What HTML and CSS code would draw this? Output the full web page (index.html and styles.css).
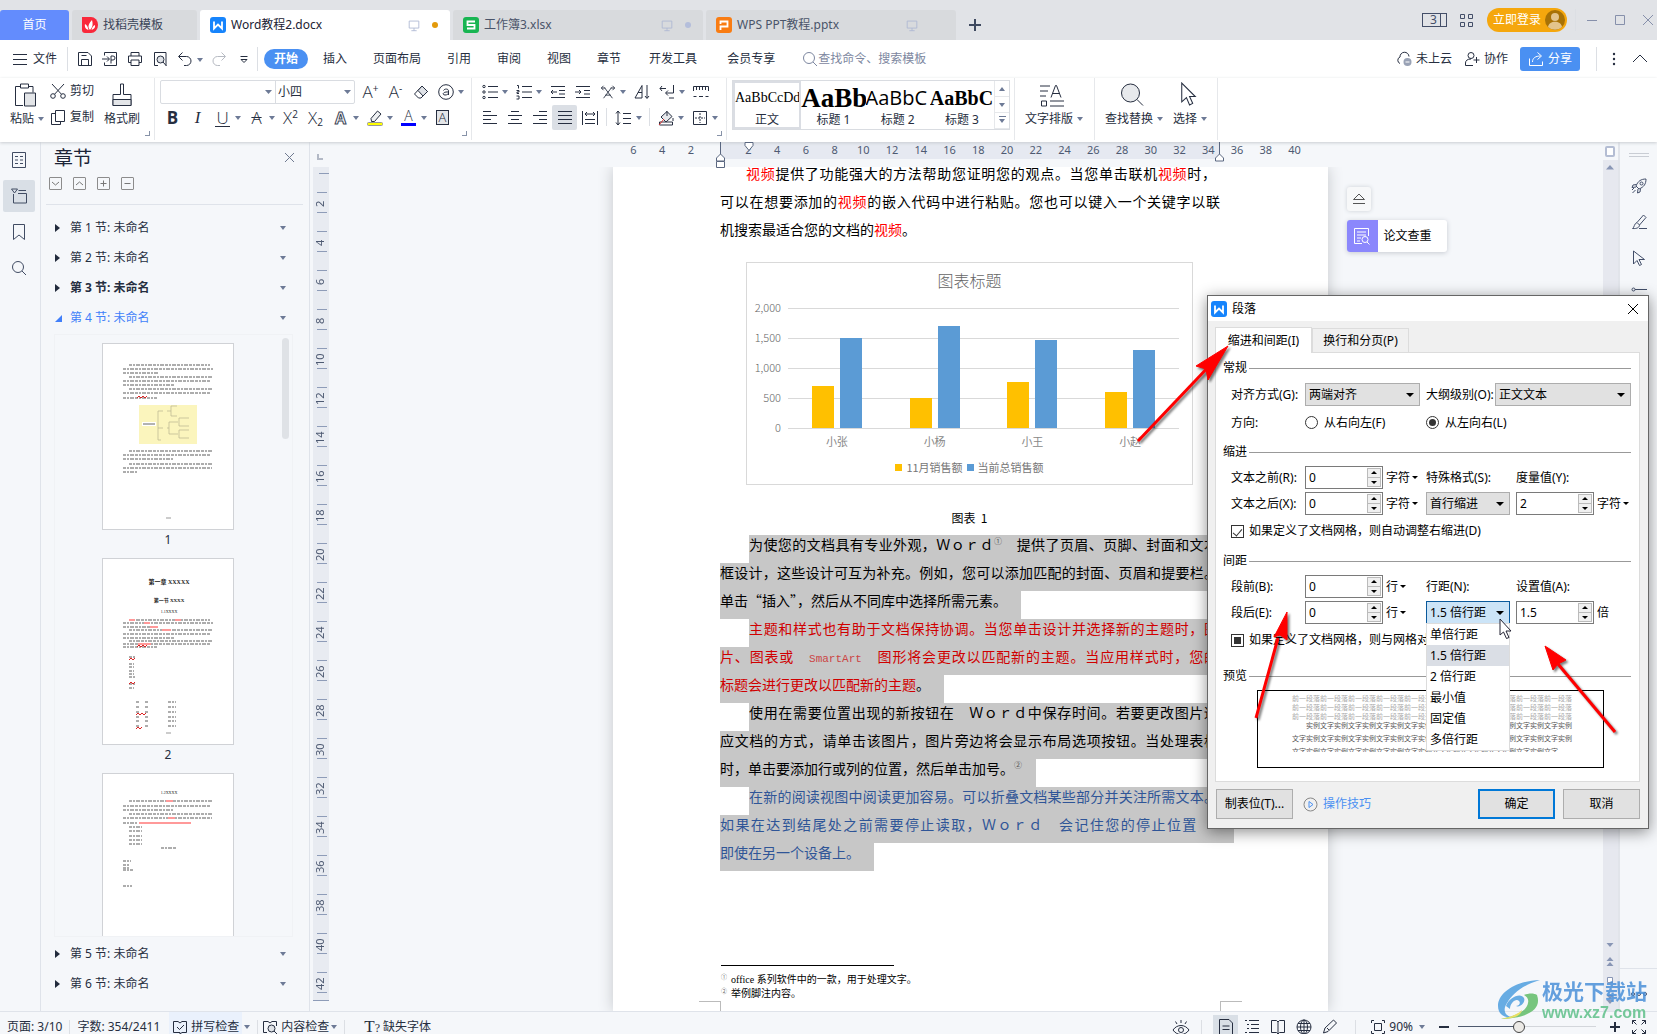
FILE: index.html
```html
<!DOCTYPE html>
<html lang="zh-CN">
<head>
<meta charset="utf-8">
<title>Word教程2.docx</title>
<link rel="stylesheet" href="styles.css">
</head>
<body>
<svg class="sprite" aria-hidden="true">
  <symbol id="i-w" viewBox="0 0 16 16"><rect width="16" height="16" rx="3" fill="#1684fc"/><path d="M4 4.500v7l4-4 4 4v-7" fill="none" stroke="#fff" stroke-width="1.800"/></symbol>
  <symbol id="i-s" viewBox="0 0 16 16"><rect width="16" height="16" rx="3" fill="#18b552"/><path d="M12 4.500H4.500v3.500h7v3.500H4" fill="none" stroke="#fff" stroke-width="1.800"/></symbol>
  <symbol id="i-p" viewBox="0 0 16 16"><rect width="16" height="16" rx="3" fill="#f97c12"/><path d="M4.500 13V9.500h7v-5h-7v2.500" fill="none" stroke="#fff" stroke-width="1.800"/></symbol>
  <symbol id="i-leaf" viewBox="0 0 16 16"><path d="M0 0h9a7 8 0 0 1 0 16H3a3 3 0 0 1-3-3z" fill="#f9283a"/><path d="M8 13C5 10 7 6 10 3c1 4 1 7-2 10zM6.500 13C3 12 2.500 9 3 7c2 1 3 3 3.500 6zM9.500 13c3-1 4-3 3.500-5-2 1-3 2.500-3.500 5z" fill="#fff"/></symbol>
  <symbol id="i-monitor" viewBox="0 0 16 16"><path d="M2.500 3.500h11v8h-11zM8 11.500v3M5 14.500h6"/></symbol>
  <symbol id="i-save" viewBox="0 0 16 16"><path d="M1.500 1.500h9.500l3.500 3.500v9.500h-13zM4.500 14V8.500h7V14M4.500 4.500h5"/></symbol>
  <symbol id="i-export" viewBox="0 0 16 16"><path d="M2.500 4.500v-3h12v13h-12v-3M0 8h7M5 5.500 7.500 8 5 10.500M9 12.500V5h2a2 2 0 0 1 0 4H9"/></symbol>
  <symbol id="i-print" viewBox="0 0 16 16"><path d="M4 5V1.500h8V5M4 11.500H1.500v-6.500h13v6.500H12M4 9h8v5.500H4z"/></symbol>
  <symbol id="i-preview" viewBox="0 0 16 16"><path d="M6 14.500H2.500v-13h11.500v13"/><circle cx="8.500" cy="8.500" r="3.500" fill="#dfe2e7"/><path d="m11 11 3.500 4"/></symbol>
  <symbol id="i-undo" viewBox="0 0 16 16"><path d="M5.500 1.500 1.500 5.500l4 4M2 5.500h7.500a4.500 4.500 0 0 1 0 9H7"/></symbol>
  <symbol id="i-redo" viewBox="0 0 16 16"><path d="m10.500 1.500 4 4-4 4M14 5.500H6.500a4.500 4.500 0 0 0 0 9H9"/></symbol>
  <symbol id="i-qmore" viewBox="0 0 16 16"><path d="M4.500 5.500h7M5 8.500l3 3 3-3z"/></symbol>
  <symbol id="i-search" viewBox="0 0 16 16"><circle cx="7" cy="7" r="5.500"/><path d="m11 11 4 4"/></symbol>
  <symbol id="i-paste" viewBox="0 0 24 24"><path d="M8 4H2.500v19H10M16 4h4v6M7.500 1.500h8v4h-8z"/><path d="M11.500 10.500h11v13h-11z" fill="#e3e5e8"/></symbol>
  <symbol id="i-cut" viewBox="0 0 16 16"><circle cx="3" cy="13" r="2.300"/><circle cx="13" cy="13" r="2.300"/><path d="M2 1l9.500 10.300M14 1 4.500 11.300"/></symbol>
  <symbol id="i-copy" viewBox="0 0 16 16"><path d="M5.500 1.500h9v11h-9zM5.500 4.500h-4v11h9v-3"/></symbol>
  <symbol id="i-brush" viewBox="0 0 24 24"><path d="M10.500 1.500h3v10.500h7.500v11H3V12h7.500z"/><path d="M3 17h18v6H3z" fill="#e3e5e8"/></symbol>
  <symbol id="i-eraser" viewBox="0 0 16 16"><path d="m5.500 14-4-4L9 2l5.500 5.500-6.500 6.500z"/><path d="M5 6.500 9 2l5.500 5.500-4.500 4.500z" fill="#dfe2e7"/></symbol>
  <symbol id="i-at" viewBox="0 0 16 16"><circle cx="8" cy="8" r="7.300"/><path d="M5.500 6.500c1-2 5-2 5 .5V11M10.500 8c-6-.5-6.500 3-3.500 3 2 0 3.500-1 3.500-2"/></symbol>
  <symbol id="i-hl" viewBox="0 0 16 16"><path d="M4 8.500 10.500 1l3.500 3-6.500 7.500H4.500z" fill="#eef0f2"/><rect x=".5" y="12.500" width="15" height="3" rx="1" fill="#ff0" stroke="#999"/></symbol>
  <symbol id="i-bul" viewBox="0 0 16 16"><circle cx="2" cy="2.500" r="1.200"/><circle cx="2" cy="8" r="1.200"/><circle cx="2" cy="13.500" r="1.200"/><path d="M6 2.500h10M6 8h10M6 13.500h10"/></symbol>
  <symbol id="i-num" viewBox="0 0 16 16"><path d="M1 1.500h1.500v3M.5 6.500h2.500v1.500H1v1.500h2M.5 12h2.500v3H.5M6 2.500h10M6 8h10M6 13.500h10"/></symbol>
  <symbol id="i-out" viewBox="0 0 16 16"><path d="M1 2.500h14M9 6.500h6M9 10h6M1 13.500h14M7 8H1M3 6 1 8l2 2"/></symbol>
  <symbol id="i-in" viewBox="0 0 16 16"><path d="M1 2.500h14M9 6.500h6M9 10h6M1 13.500h14M0 8h6M4 6l2 2-2 2"/></symbol>
  <symbol id="i-scale" viewBox="0 0 18 16"><path d="M4 15 13 3M14 15 5 3M4 1 1.500 3.500 4 6M14 1l2.500 2.500L14 6M1.500 3.500H6M12 3.500h4.500M6 11.500h6"/></symbol>
  <symbol id="i-sort" viewBox="0 0 16 16"><path d="M1 14 8 1.500V14zM4 8.500h4M13 1v13M11 12l2 2.500 2-2.500"/></symbol>
  <symbol id="i-wrap" viewBox="0 0 16 16"><path d="M3 2 1 4.500l2 2.500M1 4.500h6M14.500 1v8H7M9 6.500 6.500 9 9 11.500M10 14h5"/></symbol>
  <symbol id="i-tabs" viewBox="0 0 16 16"><path d="M.5 7V2.500h15V7M3.500 3v3M6.500 3v3M9.500 3v3M12.500 3v3M.5 12.500h3M6 12.500h4M12.500 12.500h3"/></symbol>
  <symbol id="i-al" viewBox="0 0 16 16"><path d="M1 1.500h8M1 5.500h14M1 9.500h8M1 13.500h14"/></symbol>
  <symbol id="i-ac" viewBox="0 0 16 16"><path d="M4 1.500h8M1 5.500h14M4 9.500h8M1 13.500h14"/></symbol>
  <symbol id="i-ar" viewBox="0 0 16 16"><path d="M7 1.500h8M1 5.500h14M7 9.500h8M1 13.500h14"/></symbol>
  <symbol id="i-aj" viewBox="0 0 16 16"><path d="M1 1.500h14M1 5.500h14M1 9.500h14M1 13.500h14"/></symbol>
  <symbol id="i-ad" viewBox="0 0 16 16"><path d="M.5 1v14M15.500 1v14M3 4h10M5 2 3 4l2 2M11 2l2 2-2 2M3 9.500h10M3 13.500h10"/></symbol>
  <symbol id="i-ls" viewBox="0 0 16 16"><path d="M3 1v14M1 3.500 3 1l2 2.500M1 12.500 3 15l2-2.500M8 3.500h8M8 8.500h8M8 13.500h8"/></symbol>
  <symbol id="i-fill" viewBox="0 0 16 16"><path d="m3 7 6-5.500 5 5L8 12z" fill="#e7e9ec"/><path d="M9 1v5M15 8v3M1.500 12h13v3h-13z"/><path d="m1 15 5-6" stroke="#d33"/></symbol>
  <symbol id="i-border" viewBox="0 0 16 16"><path d="M1.500 1.500h13v13h-13z"/><path d="M8 3v10M3 8h10" stroke-dasharray="2 1"/></symbol>
  <symbol id="i-typeset" viewBox="0 0 24 24"><path d="M0 3.500h10M0 8.500h8M0 13.500h6M1.500 18.500h5v5h-5zM10 18.500h14M10 23.500h14M11 15l4.500-12h1l4.500 12M13 11h7"/></symbol>
  <symbol id="i-find" viewBox="0 0 24 24"><circle cx="10.500" cy="10.500" r="9" fill="#e7e9ec"/><path d="m17 17 6 6"/></symbol>
  <symbol id="i-ptr" viewBox="0 0 16 24"><path d="M2 1v18l4.500-4 3 7 3-1.500-3-6.500H15z"/></symbol>
  <symbol id="i-arrow" viewBox="0 0 16 16"><path d="M2.500 1v13l3.500-3.500 2.500 5 2-1-2.500-5h5.500z"/></symbol>
  <symbol id="i-cloud" viewBox="0 0 16 16"><path d="M4 12.500a3.500 3.500 0 0 1 0-6.500 4.500 4.500 0 0 1 9-.5"/><circle cx="11.500" cy="11" r="4" fill="#99a2b5" stroke="none"/><path d="M9.500 11h4" stroke="#fff"/></symbol>
  <symbol id="i-collab" viewBox="0 0 16 16"><circle cx="7" cy="4.500" r="3"/><path d="M9 14.500H1.500V12c0-2.500 2-4 5.500-4M12.500 6v6M9.500 9h6"/></symbol>
  <symbol id="i-share" viewBox="0 0 16 16"><path d="M1.500 7.500v7h13v-4M4.500 11c0-4 3-6 8-6M9.500 1.500 13.500 5l-4 3.500"/></symbol>
  <symbol id="i-outline" viewBox="0 0 16 16"><path d="M1.500.5h13v15h-13zM4 4.500h3M9 4.500h3M4 8h3M9 8h3M4 11.500h3M9 11.500h3"/></symbol>
  <symbol id="i-chap" viewBox="0 0 16 16"><path d="M.5 1h6L3.500 5zM7.500 2.500H15M2.500 6v9H15.500V5.500H7"/></symbol>
  <symbol id="i-mark" viewBox="0 0 16 16"><path d="M2.500.5h11v15L8 11l-5.500 4.500z"/></symbol>
  <symbol id="i-rocket" viewBox="0 0 16 16"><path d="M5 8C7 3 10 1 15 1c0 5-2 8-7 10zM5.500 6.500 2 7l-1 2.500 4-.5M9.500 10.500 9 14l-2.500 1L7 11M1 12l2-2M1.500 15l3-3"/><circle cx="10.500" cy="5.500" r="1.500"/></symbol>
  <symbol id="i-pen" viewBox="0 0 16 16"><path d="M6 8.500 12.500 1 15 3.500 8.500 11M6 8.500 8.500 11c0 2-2 4-7 3.500 2-1 1.500-5 4.500-6M8 14.500h8"/></symbol>
  <symbol id="i-write" viewBox="0 0 16 16"><path d="M1.500 14 3 9l8.500-8 3 3L6 12.500zM5 9l2 2M7 15.500h8"/></symbol>
  <symbol id="i-spell" viewBox="0 0 16 16"><path d="M8 13.500H1.500v-11H6L8 4l2-1.500h4.500v11H10L8 15zM5 8l2.500 2.500L12 6"/></symbol>
  <symbol id="i-content" viewBox="0 0 16 16"><path d="M5 13.500H1.500v-11H6L8 4l2-1.500h4.500V7"/><circle cx="9.500" cy="9.500" r="3.500" fill="#dfe2e7"/><path d="m12 12 3 3"/></symbol>
  <symbol id="i-eye" viewBox="0 0 18 18"><path d="M1 12c4-6 12-6 16 0-4 6-12 6-16 0zM9 2v3M3.500 3.500 5 6M14.500 3.500 13 6"/><circle cx="9" cy="12" r="2.500"/></symbol>
  <symbol id="i-doc" viewBox="0 0 16 16"><path d="M1.500.5H11L14.500 4v11.500h-13zM4.500 7h7M4.500 10.500h7"/></symbol>
  <symbol id="i-list" viewBox="0 0 16 16"><path d="M1 1.500h2M5 1.500h10M3 5.500h2M7 5.500h8M3 9.500h2M7 9.500h8M1 13.500h2M5 13.500h10"/></symbol>
  <symbol id="i-book" viewBox="0 0 16 16"><path d="M8 3 6.500 1.500h-5v12h5L8 15l1.500-1.500h5v-12h-5zM8 3v12"/></symbol>
  <symbol id="i-globe" viewBox="0 0 16 16"><circle cx="8" cy="8" r="7"/><ellipse cx="8" cy="8" rx="3.500" ry="7"/><path d="M8 1v14M1 8h14M2 4.500h12M2 11.500h12"/></symbol>
  <symbol id="i-fit" viewBox="0 0 16 16"><path d="M1.500 4V1.500H4M12 1.500h2.500V4M14.500 12v2.500H12M4 14.500H1.500V12M4.500 4.500h7v7h-7z"/></symbol>
  <symbol id="i-full" viewBox="0 0 16 16"><path d="M1.500 5V1.500H5M1.500 1.500l4 4M11 1.500h3.500V5M14.500 1.500l-4 4M14.500 11v3.500H11M14.500 14.500l-4-4M5 14.500H1.500V11M1.500 14.500l4-4"/></symbol>
</svg>

<header class="tabbar">
  <button class="tab home">首页</button>
  <button class="tab docer"><svg class="logo"><use href="#i-leaf"/></svg>找稻壳模板</button>
  <button class="tab file current"><svg class="logo"><use href="#i-w"/></svg>Word教程2.docx<svg class="ic mon"><use href="#i-monitor"/></svg><i class="dot"></i></button>
  <button class="tab file"><svg class="logo"><use href="#i-s"/></svg>工作簿3.xlsx<svg class="ic mon"><use href="#i-monitor"/></svg><i class="dot idle"></i></button>
  <button class="tab file"><svg class="logo"><use href="#i-p"/></svg>WPS PPT教程.pptx<svg class="ic mon"><use href="#i-monitor"/></svg><i class="dot none"></i></button>
  <button class="newtab" aria-label="新建"><svg class="ic"><path d="M8 2v12M2 8h12" stroke-width="2"/></svg></button>
  <div class="winctl">
    <button class="tabcount" aria-label="标签"><span>3</span><i></i></button>
    <button aria-label="应用"><svg class="ic"><path d="M1.500 2.500h4v4h-4zM9.500 2.500h4v4h-4zM1.500 10.500h4v4h-4zM9.500 10.500h4v4h-4z"/></svg></button>
    <button class="login">立即登录<svg width="20" height="20" viewBox="0 0 20 20"><circle cx="10" cy="10" r="10" fill="#a87206"/><circle cx="10" cy="7" r="4" fill="#e3c48c"/><path d="M3 17c1-7 13-7 14 0a10 10 0 0 1-14 0z" fill="#e3c48c"/></svg></button>
    <i class="sep"></i>
    <button aria-label="最小化"><svg class="ic"><path d="M3 8.500h10"/></svg></button>
    <button aria-label="最大化"><svg class="ic"><path d="M3.500 3.500h9v9h-9z"/></svg></button>
    <button aria-label="关闭"><svg class="ic"><path d="m3 3 10 10M13 3 3 13"/></svg></button>
  </div>
</header>

<nav class="menubar">
  <button class="filemenu"><svg class="ic"><path d="M1 3.500h14M1 8.500h14M1 13.500h14"/></svg>文件</button>
  <i class="sep"></i>
  <div class="tools">
    <button class="ib" aria-label="保存"><svg class="ic"><use href="#i-save"/></svg></button>
    <button class="ib" aria-label="输出"><svg class="ic"><use href="#i-export"/></svg></button>
    <button class="ib" aria-label="打印"><svg class="ic"><use href="#i-print"/></svg></button>
    <button class="ib" aria-label="预览"><svg class="ic"><use href="#i-preview"/></svg></button>
    <button class="ib dd" aria-label="撤销"><svg class="ic"><use href="#i-undo"/></svg></button>
    <button class="ib faded" aria-label="恢复"><svg class="ic"><use href="#i-redo"/></svg></button>
    <button class="ib" aria-label="更多"><svg class="ic"><use href="#i-qmore"/></svg></button>
  </div>
  <i class="sep"></i>
  <button class="menu on">开始</button>
  <button class="menu">插入</button><button class="menu">页面布局</button><button class="menu">引用</button><button class="menu">审阅</button><button class="menu">视图</button><button class="menu">章节</button><button class="menu wide">开发工具</button><button class="menu wide">会员专享</button>
  <button class="search"><svg class="ic"><use href="#i-search"/></svg>查找命令、搜索模板</button>
  <div class="menuright">
    <button><svg class="ic"><use href="#i-cloud"/></svg>未上云</button>
    <button><svg class="ic"><use href="#i-collab"/></svg>协作</button>
    <button class="share"><svg class="ic"><use href="#i-share"/></svg>分享</button>
    <i class="sep"></i>
    <button aria-label="更多选项"><svg class="ic"><g fill="currentColor" stroke="none"><circle cx="8" cy="3" r="1.200"/><circle cx="8" cy="8" r="1.200"/><circle cx="8" cy="13" r="1.200"/></g></svg></button>
    <button aria-label="收起"><svg class="ic"><path d="m1 11 7-7 7 7"/></svg></button>
  </div>
</nav>

<section class="ribbon">
  <div class="group clip">
    <button class="big"><svg class="ic24"><use href="#i-paste"/></svg><span class="dd2">粘贴</span></button>
    <div class="stack"><button class="lab"><svg class="ic"><use href="#i-cut"/></svg>剪切</button><button class="lab"><svg class="ic"><use href="#i-copy"/></svg>复制</button></div>
    <button class="big"><svg class="ic24"><use href="#i-brush"/></svg><span>格式刷</span></button>
    <i class="corner"></i>
  </div>
  <div class="group font">
    <div class="row">
      <div class="fontbox"><select aria-label="字体"><option></option></select><select class="size" aria-label="字号"><option>小四</option></select></div>
      <button class="ib glyph">A<sup>+</sup></button>
      <button class="ib glyph">A<sup>-</sup></button>
      <button class="ib" aria-label="清除格式"><svg class="ic"><use href="#i-eraser"/></svg></button>
      <button class="ib dd" aria-label="拼音"><svg class="ic"><use href="#i-at"/></svg></button>
    </div>
    <div class="row">
      <button class="ib glyph b">B</button>
      <button class="ib glyph i">I</button>
      <button class="ib dd glyph u"><span>U</span></button>
      <button class="ib dd glyph"><s>A</s></button>
      <button class="ib glyph">X<sup>2</sup></button>
      <button class="ib glyph">X<sub>2</sub></button>
      <button class="ib dd glyph fx">A</button>
      <button class="ib dd" aria-label="突出显示"><svg class="ic"><use href="#i-hl"/></svg></button>
      <button class="ib dd glyph col"><span>A</span></button>
      <button class="ib glyph boxed"><span>A</span></button>
    </div>
    <i class="corner"></i>
  </div>
  <div class="group para">
    <div class="row">
      <button class="ib dd" aria-label="项目符号"><svg class="ic"><use href="#i-bul"/></svg></button>
      <button class="ib dd" aria-label="编号"><svg class="ic"><use href="#i-num"/></svg></button>
      <button class="ib" aria-label="减少缩进"><svg class="ic"><use href="#i-out"/></svg></button>
      <button class="ib" aria-label="增加缩进"><svg class="ic"><use href="#i-in"/></svg></button>
      <button class="ib dd" aria-label="中文版式"><svg class="ic"><use href="#i-scale"/></svg></button>
      <button class="ib" aria-label="排序"><svg class="ic"><use href="#i-sort"/></svg></button>
      <button class="ib dd" aria-label="换行"><svg class="ic"><use href="#i-wrap"/></svg></button>
      <button class="ib" aria-label="制表位"><svg class="ic"><use href="#i-tabs"/></svg></button>
    </div>
    <div class="row">
      <button class="ib" aria-label="左对齐"><svg class="ic"><use href="#i-al"/></svg></button>
      <button class="ib" aria-label="居中"><svg class="ic"><use href="#i-ac"/></svg></button>
      <button class="ib" aria-label="右对齐"><svg class="ic"><use href="#i-ar"/></svg></button>
      <button class="ib sel" aria-label="两端对齐"><svg class="ic"><use href="#i-aj"/></svg></button>
      <button class="ib" aria-label="分散对齐"><svg class="ic"><use href="#i-ad"/></svg></button>
      <i class="mini"></i>
      <button class="ib dd" aria-label="行距"><svg class="ic"><use href="#i-ls"/></svg></button>
      <i class="mini"></i>
      <button class="ib dd" aria-label="底纹"><svg class="ic"><use href="#i-fill"/></svg></button>
      <button class="ib dd" aria-label="边框"><svg class="ic"><use href="#i-border"/></svg></button>
    </div>
    <i class="corner"></i>
  </div>
  <div class="group gal">
    <div class="gallery">
      <button class="style on"><span class="s0">AaBbCcDd</span>正文</button>
      <button class="style"><span class="s1">AaBb</span>标题 1</button>
      <button class="style"><span class="s2">AaBbC</span>标题 2</button>
      <button class="style"><span class="s3">AaBbC</span>标题 3</button>
      <div class="galctl"><button class="up" aria-label="上"></button><button aria-label="下"></button><button class="all" aria-label="全部"></button></div>
    </div>
  </div>
  <div class="group type"><button class="big"><svg class="ic24"><use href="#i-typeset"/></svg><span class="dd2">文字排版</span></button></div>
  <div class="group last">
    <button class="big"><svg class="ic24"><use href="#i-find"/></svg><span class="dd2">查找替换</span></button>
    <button class="big"><svg class="ic24"><use href="#i-ptr"/></svg><span class="dd2">选择</span></button>
  </div>
</section>

<main class="main">
  <aside class="rail">
    <button aria-label="目录"><svg class="ic"><use href="#i-outline"/></svg></button>
    <button class="on" aria-label="章节"><svg class="ic"><use href="#i-chap"/></svg></button>
    <button aria-label="书签"><svg class="ic"><use href="#i-mark"/></svg></button>
    <button aria-label="查找"><svg class="ic"><use href="#i-search"/></svg></button>
  </aside>
  <aside class="panel">
    <div class="phead"><h2>章节</h2><button aria-label="关闭"><svg class="ic"><path d="m3 3 9 9M12 3l-9 9"/></svg></button></div>
    <div class="pbtns">
      <button aria-label="展开"><svg><path d="m3 5 3.500 3L10 5"/></svg></button><button aria-label="收起"><svg><path d="m3 8 3.500-3L10 8"/></svg></button><button aria-label="新增"><svg><path d="M3.500 6.500h6M6.500 3.500v6"/></svg></button><button aria-label="删除"><svg><path d="M3.500 6.500h6"/></svg></button>
    </div>
    <ul class="secs">
      <li>第 1 节: 未命名</li><li>第 2 节: 未命名</li><li class="bold">第 3 节: 未命名</li><li class="open">第 4 节: 未命名</li>
    </ul>
    <div class="thumbs">
      <figure>
        <svg class="thumb" viewBox="0 0 130 185">
          <g class="txt"><path d="M26 21H107M20 25H110M20 29H56M26 33H109M20 37H108M20 41H72M26 45H110M20 49H107M20 54H54M26 107H110M20 111H107M20 115H70M26 120H110M20 124H109M20 128H34"/></g>
          <path class="wavy" d="M34 54l2-2 2 2 2-2 2 2 2-2"/>
          <rect x="36" y="61" width="58" height="39" fill="#fbf5bd"/>
          <path d="M55 80V67H60M55 80V96H58M55 84H60M64 67H68V62H74M68 67V72H74M64 84H66V78H75M66 84V90H75M76 78V74H86M76 78V82H86M76 90V86H86M76 90V94H86" fill="none" stroke="#b9b48f" stroke-width=".7"/>
          <rect x="39" y="78" width="14" height="4" fill="#fff"/><path d="M40 80H52" stroke="#666"/>
          <path d="M63 174h5" stroke="#999"/>
        </svg><figcaption>1</figcaption>
      </figure>
      <figure>
        <svg class="thumb" viewBox="0 0 130 185">
          <g fill="#222" font-family="Liberation Serif, Noto Sans CJK SC, serif" text-anchor="middle"><text x="66" y="25" font-size="6" font-weight="700">第一章 XXXXX</text><text x="66" y="43" font-size="5" font-weight="700">第一节 XXXX</text><text x="66" y="54" font-size="4">1.1XXXX</text></g>
          <g class="txt"><path d="M26 61H107M20 64H110M20 68H56M26 71H109M20 75H108M20 79H72M26 82H110M20 85H107M20 88H54M26 98H33M26 105H31M26 108H31M26 112H31M26 115H31M26 118H33M26 125H33M26 129H31M33 143h3M42 143h3M65 143h8M33 148h3M42 148h3M65 148h8M33 153h3M42 153h3M65 153h8M33 158h3M42 158h3M65 158h8M33 162h3M42 162h3M65 162h8M33 167h3M42 167h3M65 167h8"/></g>
          <path class="redtxt" d="M26 61H32M72 61H78M41 64H47M47 68H55M59 71H68M35 85H48"/>
          <path class="wavy" d="M34 88l2-2 2 2 2-2 2 2 2-2M26 101l2-2 2 2 2-2M26 125l2-2 2 2 2-2M33 156l2-2 2 2 2-2 2 2 2-2M33 170l2-2 2 2 2-2"/>
          <path d="M63 174h5" stroke="#999"/>
        </svg><figcaption>2</figcaption>
      </figure>
      <figure>
        <svg class="thumb" viewBox="0 0 130 185">
          <text x="66" y="20" font-size="4" text-anchor="middle" fill="#222" font-family="Liberation Serif, serif">1.2XXXX</text>
          <g class="txt"><path d="M26 27H109M20 32H107M20 36H70M26 40H110M20 44H109M20 49H34M26 53H39M26 57H39M26 62H39M26 66H39M26 70H39M58 74H74M20 87H28M20 91H27M20 94H27M20 96H30M20 112H29"/></g>
          <path class="redtxt" d="M63 27H70M65 44H72M36 49H88"/>
        </svg>
      </figure>
    </div>
    <ul class="secs foot"><li>第 5 节: 未命名</li><li>第 6 节: 未命名</li></ul>
  </aside>
  <div class="vruler"><i class="tabstop"></i>
    <ol><li>2</li><li>4</li><li>6</li><li>8</li><li>10</li><li>12</li><li>14</li><li>16</li><li>18</li><li>20</li><li>22</li><li>24</li><li>26</li><li>28</li><li>30</li><li>32</li><li>34</li><li>36</li><li>38</li><li>40</li><li>42</li></ol>
  </div>
  <div class="docarea">
    <div class="hruler"><div class="hscale">
      <i class="extent"></i>
      <ol><li>6</li><li>4</li><li>2</li><li></li><li>2</li><li>4</li><li>6</li><li>8</li><li>10</li><li>12</li><li>14</li><li>16</li><li>18</li><li>20</li><li>22</li><li>24</li><li>26</li><li>28</li><li>30</li><li>32</li><li>34</li><li>36</li><li>38</li><li>40</li></ol>
      <svg class="marks" width="520" height="28"><path d="M7.500 0v12l-4 4v3h8v-3l-4-4M3.500 19.500h8v6h-8zM32 .5h8v3l-4 5-4-5zM506.500 0v12l-4 4v3h8v-3l-4-4"/></svg>
    </div></div>
    <div class="canvas">
      <article class="page">
        <div class="body">
          <p class="ln ind"><em>视频</em>提供了功能强大的方法帮助您证明您的观点。当您单击联机<em>视频</em>时，</p>
          <p class="ln">可以在想要添加的<em>视频</em>的嵌入代码中进行粘贴。您也可以键入一个关键字以联</p>
          <p class="ln end">机搜索最适合您的文档的<em>视频</em>。</p>
          <figure class="chart">
            <h3>图表标题</h3>
            <div class="plotrow">
              <ul class="yaxis"><li>2,000</li><li>1,500</li><li>1,000</li><li>500</li><li>0</li></ul>
              <div class="plot">
                <div class="cat"><i style="height:35%"></i><b style="height:75%"></b></div>
                <div class="cat"><i style="height:25%"></i><b style="height:85%"></b></div>
                <div class="cat"><i style="height:38%"></i><b style="height:73%"></b></div>
                <div class="cat"><i style="height:30%"></i><b style="height:65%"></b></div>
              </div>
            </div>
            <ul class="xaxis"><li>小张</li><li>小杨</li><li>小王</li><li>小赵</li></ul>
            <div class="legend"><i></i>11月销售额<b></b>当前总销售额</div>
          </figure>
          <p class="caption">图表&nbsp; 1</p>
          <div class="picked">
            <p class="ln ind">为使您的文档具有专业外观，Ｗｏｒｄ<sup>①</sup>　提供了页眉、页脚、封面和文本</p>
            <p class="ln">框设计，这些设计可互为补充。例如，您可以添加匹配的封面、页眉和提要栏。</p>
            <p class="ln end">单击“插入”，然后从不同库中选择所需元素。</p>
            <p class="ln ind red">主题和样式也有助于文档保持协调。当您单击设计并选择新的主题时，图</p>
            <p class="ln red">片、图表或　<small>SmartArt</small>　图形将会更改以匹配新的主题。当应用样式时，您的</p>
            <p class="ln end red">标题会进行更改以匹配新的主题<span>。</span></p>
            <p class="ln ind">使用在需要位置出现的新按钮在　Ｗｏｒｄ中保存时间。若要更改图片适</p>
            <p class="ln">应文档的方式，请单击该图片，图片旁边将会显示布局选项按钮。当处理表格</p>
            <p class="ln end">时，单击要添加行或列的位置，然后单击加号。<sup>②</sup></p>
            <p class="ln ind blue">在新的阅读视图中阅读更加容易。可以折叠文档某些部分并关注所需文本。</p>
            <p class="ln blue">如果在达到结尾处之前需要停止读取，Ｗｏｒｄ　会记住您的停止位置　-</p>
            <p class="ln end blue">即使在另一个设备上。</p>
          </div>
        </div>
        <footer class="notes"><p><sup>①</sup>office 系列软件中的一款，用于处理文字。</p><p><sup>②</sup>举例脚注内容。</p></footer>
        <div class="crops"><i></i><i></i></div>
      </article>
      <div class="float">
        <button class="eject" aria-label="收起"><svg class="ic"><path d="m2.500 8.500 5.500-5.500 5.500 5.500zM2 12.500h12"/></svg></button>
        <button class="check"><span><svg width="18" height="18" viewBox="0 0 18 18"><path d="M9 16.500H1.500v-15h14V9M4 5h9M4 8h9M4 11h4M4 14h3"/><circle cx="12" cy="12.500" r="3"/><path d="m14 15 2.500 2.500"/></svg></span>论文查重</button>
      </div>
    </div>
  </div>
  <div class="vscroll">
    <i class="view"></i>
    <svg class="up" width="14" height="12"><path d="M3 8.500 7 4l4 4.500z"/></svg>
    <svg class="down" width="14" height="68"><path d="M3.500 4h7L7 8zM3.500 22h7L7 18zM3.500 27h7L7 23zM3.500 56h7L7 60zM3.500 61h7L7 65z"/><path d="M4.500 38.500h5v5h-5z" class="o"/></svg>
  </div>
  <aside class="rrail">
    <i class="grip"></i>
    <svg class="ic"><use href="#i-rocket"/></svg><svg class="ic"><use href="#i-pen"/></svg><svg class="ic"><use href="#i-arrow"/></svg><svg class="ic"><circle cx="2.500" cy="3.500" r="1.500"/><path d="M4 3.500h12"/></svg>
    <div class="more"><i></i><i></i><i></i></div>
  </aside>
</main>

<footer class="status">
  <span>页面: 3/10</span><i class="sep"></i><span>字数: 354/2411</span>
  <button class="spell"><svg class="ic"><use href="#i-spell"/></svg>拼写检查</button><i class="car"></i><i class="sep"></i>
  <button class="cont"><svg class="ic"><use href="#i-content"/></svg>内容检查</button><i class="car"></i><i class="sep"></i>
  <button class="miss"><span class="tq">T<sub>?</sub></span>缺失字体</button>
  <div class="sright">
    <button aria-label="护眼"><svg class="ic18"><use href="#i-eye"/></svg></button><i class="sep"></i>
    <div class="views">
      <button class="on" aria-label="页面"><svg class="ic"><use href="#i-doc"/></svg></button>
      <button aria-label="大纲"><svg class="ic"><use href="#i-list"/></svg></button>
      <button aria-label="阅读"><svg class="ic"><use href="#i-book"/></svg></button>
      <button aria-label="网页"><svg class="ic"><use href="#i-globe"/></svg></button>
      <button aria-label="写作"><svg class="ic"><use href="#i-write"/></svg></button>
    </div><i class="sep"></i>
    <button class="zoomv"><svg class="ic"><use href="#i-fit"/></svg>90%</button><i class="car"></i>
    <button class="minus" aria-label="缩小"><svg class="ic"><path d="M3 8h10" stroke-width="2"/></svg></button>
    <input type="range" min="0" max="100" value="44" aria-label="缩放">
    <button aria-label="放大"><svg class="ic"><path d="M3 8h10M8 3v10" stroke-width="2"/></svg></button>
    <button class="full" aria-label="全屏"><svg class="ic"><use href="#i-full"/></svg></button>
  </div>
</footer>

<form class="dialog" role="dialog" aria-label="段落">
  <div class="dtitle"><svg class="logo"><use href="#i-w"/></svg>段落<button type="button" aria-label="关闭"><svg class="ic"><path d="m3 3 10 10M13 3 3 13"/></svg></button></div>
  <div class="dtabs"><button type="button" class="on">缩进和间距(I)</button><button type="button">换行和分页(P)</button></div>
  <div class="dpanel">
    <h4>常规</h4>
    <div class="r2">
      <label for="al">对齐方式(G):</label><select id="al" class="w115"><option>两端对齐</option></select>
      <label for="ol" class="lg">大纲级别(O):</label><select id="ol" class="grow"><option>正文文本</option></select>
    </div>
    <div class="r2 dir">
      <span>方向:</span>
      <label><input type="radio" name="dir">从右向左(F)</label>
      <label><input type="radio" name="dir" checked>从左向右(L)</label>
    </div>
    <h4>缩进</h4>
    <div class="grid">
      <label for="tb">文本之前(R):</label><span class="spin"><input id="tb" value="0"><i></i></span><span class="unit dd3">字符</span><label for="sp">特殊格式(S):</label><label for="mv">度量值(Y):</label><span></span>
      <label for="ta">文本之后(X):</label><span class="spin"><input id="ta" value="0"><i></i></span><span class="unit dd3">字符</span><select id="sp"><option>首行缩进</option></select><span class="spin"><input id="mv" value="2"><i></i></span><span class="unit dd3">字符</span>
    </div>
    <label class="ck"><input type="checkbox" checked>如果定义了文档网格，则自动调整右缩进(D)</label>
    <h4>间距</h4>
    <div class="grid">
      <label for="pb">段前(B):</label><span class="spin"><input id="pb" value="0"><i></i></span><span class="unit dd3">行</span><label for="ls">行距(N):</label><label for="sv">设置值(A):</label><span></span>
      <label for="pa">段后(E):</label><span class="spin"><input id="pa" value="0"><i></i></span><span class="unit dd3">行</span>
      <span class="combo"><select id="ls" class="hot"><option>1.5 倍行距</option></select>
        <ul class="drop"><li>单倍行距</li><li class="on">1.5 倍行距</li><li>2 倍行距</li><li>最小值</li><li>固定值</li><li>多倍行距</li></ul>
        <svg class="mouse" width="14" height="22" viewBox="0 0 14 22"><path d="M1 1v16l3.500-3 3 6.500 2.500-1-3-6.500H12z"/></svg>
      </span>
      <span class="spin"><input id="sv" value="1.5"><i></i></span><span class="unit">倍</span>
    </div>
    <label class="ck mixed"><input type="checkbox">如果定义了文档网格，则与网格对</label>
    <h4 class="pv">预览</h4>
    <div class="preview">
      <p>前一段落前一段落前一段落前一段落前一段落前一段落前一段落前一段落前一段落前一段落</p>
      <p>前一段落前一段落前一段落前一段落前一段落前一段落前一段落前一段落前一段落前一段落</p>
      <p>前一段落前一段落前一段落前一段落前一段落前一段落前一段落前一段落前一段落前一段落</p>
      <p class="dk">实例文字实例文字实例文字实例文字实例文字实例文字实例文字实例文字实例文字实例文字实例文字实例文字实例文字实例文字实例文字实例文字实例文字实例文字实例文字实例文字实例文字实例文字实例文字实例文字实例文字实例文字实例文字实例文字实例文字</p>
    </div>
  </div>
  <div class="dfoot">
    <button type="button">制表位(T)...</button>
    <a href="#tips"><svg width="15" height="15" viewBox="0 0 15 15"><circle cx="7.500" cy="7.500" r="6.500" stroke="#888"/><path d="M6 4.500v6l4-3z"/></svg>操作技巧</a>
    <button type="button" class="ok">确定</button><button type="button">取消</button>
  </div>
</form>

<svg class="arrows" width="500" height="420" viewBox="0 0 500 420">
  <g><path d="M12 111 88 31"/><path class="hd" d="M102 16 70 36 80 39 82 50z"/></g>
  <g><path d="M130 388 152 308"/><path class="hd" d="M161 282 148 307 154 305 161 310z"/></g>
  <g><path d="M489 402 432 334"/><path class="hd" d="M419 316 427 340 432 334 440 330z"/></g>
</svg>
<div class="wm">
  <svg width="46" height="42" viewBox="0 0 46 42"><path d="M43 1C18 2 1 14 1 27c0 8 6 12 13 11C7 36 6 30 10 24 16 14 26 6 43 1z" fill="#4f9fe0"/><path d="M9 27c3-9 15-14 18-8 2 4-4 10-8 8 3 0 5-3 3-5-3-3-9 2-9 8z" fill="#4f9fe0"/><path d="M40 16c5 14-8 23-36 24 14-3 26-8 27-16 1-4-1-6-4-8 5-2 10-2 13 0z" fill="#62bd69"/><path d="M4 40c10-2 17-5 21-9-1 6-9 9-21 9z" fill="#e8dc4c"/></svg>
  <div><strong>极光下载站</strong><span>www.xz7.com</span></div>
</div>
</body>
</html>
```
FILE: styles.css
```css
*{box-sizing:border-box}
html,body{height:100%}
body{margin:0;display:flex;flex-direction:column;overflow:hidden;position:relative;font:12px/16px "Noto Sans","Noto Sans CJK SC",sans-serif;color:#262e40;background:#f5f7fa}
button,input,select{font:inherit;color:inherit;margin:0}
button{background:none;border:0;padding:0;display:inline-flex;align-items:center;white-space:nowrap}
ul,ol{list-style:none;margin:0;padding:0}
p,h2,h3,h4,figure{margin:0;font-weight:400}
i{font-style:normal}
svg{flex:none;fill:none}
.sprite{position:absolute;width:0;height:0}
.ic{width:16px;height:16px;stroke:currentColor}
.ic18{width:18px;height:18px;stroke:currentColor}
.ic24{width:24px;height:24px;stroke:currentColor}
.logo{width:16px;height:16px}
.sep{width:1px;height:20px;background:#dcdfe4;flex:none}

/* window tabs */
.tabbar{display:flex;height:40px;flex:none;background:#e1e3e7;padding-top:10px;gap:3px}
.tab{height:30px;border-radius:3px 3px 0 0;background:#d8dadd;padding:0 10px;gap:5px;color:#4a5469}
.tab.home{width:69px;justify-content:center;background:#638cfd;color:#fff}
.tab.docer{width:125px;color:#3a4458}
.tab.file{width:250px}
.tab.current{background:#fff;color:#1b2233}
.mon{margin-left:auto;margin-right:6px;width:14px;height:14px;color:#aeb8d4}
.dot{width:6px;height:6px;border-radius:50%;background:#e39a0b;margin-right:2px}
.dot.idle{background:#b4bedb}
.dot.none{visibility:hidden;margin-right:10px}
.newtab{padding-left:8px;color:#3f4a60}
.winctl{margin:-10px 1px 0 auto;display:flex;align-items:center;gap:12px;color:#8690ab}
.winctl .sep{height:22px;margin:0 -4px}
.winctl button:nth-of-type(-n+2){color:#434e68}
.tabcount{width:25px;height:14px;border:1px solid;justify-content:flex-end;gap:3px;line-height:12px}
.tabcount i{width:6px;height:12px;border-left:1px solid}
.login{height:24px;border-radius:12px;background:#f5a70d;color:#fff;padding:0 2px 0 6px;gap:4px}

/* menu bar */
.menubar{display:flex;align-items:center;height:38px;flex:none;background:#fff}
.filemenu{width:67px;padding-left:12px;gap:5px}
.menubar .sep{height:24px}
.tools{display:flex;padding:0 0 0 4px;width:189px}
.ib{width:25px;height:25px;justify-content:center;position:relative;flex:none}
.ib.dd{width:34px;padding-right:9px}
.ib.dd::after,.dd2::after,.car::after{content:"";border:3px solid transparent;border-top:4px solid #6d7a96;border-bottom:0}
.ib.dd::after{position:absolute;left:25px;top:11px}
.faded{color:#b6bac2}
.menu{padding:0 13px}
.menu.wide{padding:0 15px}
.menu.on{margin:0 2px 0 6px;padding:0 10px;height:20px;border-radius:10px;background:#4a90f2;color:#fff;font-weight:700}
.search{margin-left:12px;color:#7d87a0}
.menuright{margin-left:auto;display:flex;align-items:center;gap:12px;padding-right:9px}
.menuright button{gap:4px}
.menuright .share{width:60px;height:24px;justify-content:center;border-radius:3px;background:#4a90f2;color:#fff;margin-right:4px}
.menuright button:last-child{margin-left:-2px}
.menuright .sep{margin-right:-3px}

/* ribbon */
.ribbon{display:flex;height:64px;flex:none;background:#fff;box-shadow:0 1px 3px #c9ccd1;z-index:1;position:relative}
.group{position:relative;height:62px;border-right:1px solid #e6e8eb;padding:1px 5px 0;flex:none}
.corner{position:absolute;right:4px;bottom:4px;width:5px;height:5px;border:solid #8792a8;border-width:0 1px 1px 0}
.row,.stack,.clip,.last{display:flex}
.clip{width:155px;padding-left:10px;gap:10px;padding-top:4px}
.stack{flex-direction:column;gap:8px}
.lab{gap:4px;height:18px}
.big{flex-direction:column;align-items:center;height:50px;gap:4px}
.big .ic24{height:25px}
.dd2{display:flex;align-items:center}
.dd2::after{margin:0 -4px 0 4px}
.font{width:317px}
.para{width:255px}
.fontbox{display:flex;width:195px;height:24px;border:1px solid #d9dce1;border-radius:2px;margin:1px 3px 0 0}
.row{height:26px}
.fontbox select{border:0;appearance:none;width:114px;padding:0 2px;background:url("data:image/svg+xml,%3Csvg xmlns='http://www.w3.org/2000/svg' width='8' height='4'%3E%3Cpath d='M0 0h7L3.500 4z' fill='%236d7a96'/%3E%3C/svg%3E") right 2px center no-repeat}
.fontbox .size{width:79px;border-left:1px solid #d9dce1}
.glyph{font-family:"Open Sans","Noto Sans",sans-serif;font-size:17px;font-weight:300}
.glyph sup,.glyph sub{font-size:10px;line-height:10px;font-weight:400}
.glyph sup{margin-top:-8px}
.glyph sub{margin-top:8px}
.glyph.b{font-weight:700}
.glyph.i{font-family:"Liberation Serif",serif;font-style:italic;font-weight:400}
.glyph span{line-height:16px}
.glyph.u span{border-bottom:1px solid;padding:0 1px;line-height:17px}
.glyph.fx{-webkit-text-stroke:1px #3c4557;color:#fff;font-weight:700;font-size:16px}
.glyph.col span{border-bottom:3px solid #00f;font-size:14px;line-height:14px;padding:0 3px}
.glyph.boxed span{border:1px solid;background:#e3e5e8;font-size:13px;line-height:13px;padding:0 2px}
.sel{background:#dbdfe5;border-radius:2px}
.mini{width:1px;height:18px;background:#dcdfe4;margin:3px 4px}
.gal{width:288px}
.gallery{display:flex;width:278px;height:50px;margin-top:1px;border:1px solid #d9dce1}
.style{flex:1;min-width:0;flex-direction:column;overflow:hidden;height:48px;padding:4px 0 0;gap:3px;color:#262e40}
.style.on{border:2px solid #dadde3;padding-top:2px}
.style span{height:24px;line-height:26px;color:#000;align-self:flex-start;font-family:"Liberation Serif",serif}
.style .s0{font-size:14px}
.style .s1{font-size:27px;font-weight:700}
.style .s2{font-size:20px;font-family:"Open Sans","Noto Sans",sans-serif}
.style .s3{font-size:20px;font-weight:700}
.galctl{width:15px;border-left:1px solid #e6e8eb;display:flex;flex-direction:column;flex:none}
.galctl button{flex:1;justify-content:center;border-bottom:1px solid #e6e8eb}
.galctl button::after{content:"";border:3px solid transparent;border-top:4px solid #6d7a96;border-bottom:0}
.galctl .up::after{transform:rotate(180deg)}
.galctl .all::before{content:"";position:absolute;width:7px;height:1px;background:#6d7a96;margin-top:-8px}
.type{width:80px;display:flex;justify-content:center;padding-top:4px;padding-right:10px}
.last{width:123px;padding:4px 10px 0;gap:14px}

/* side rail and section panel */
.main{flex:1;min-height:0;display:flex}
.rail{width:41px;border-right:1px solid #dfe3ea;padding:2px 5px 0 3px;display:flex;flex-direction:column;gap:4px;color:#414c63}
.rail button{height:32px;justify-content:center;border-radius:2px}
.rail .on{background:#d9dfe6}
.panel{width:269px;flex:none;border-right:1px solid #dfe3ea;display:flex;flex-direction:column}
.phead{display:flex;justify-content:space-between;height:30px;align-items:center;padding:2px 11px 0 13px}
.phead h2{font-size:19px;line-height:26px;color:#1c2436}
.phead svg{color:#6f7a90}
.pbtns{display:flex;gap:11px;margin:5px 6px 0 5px;padding:0 3px 14px;border-bottom:1px solid #dfe3ea}
.pbtns button{border:1px solid #8c8c8c;border-radius:1px;width:13px;height:13px}
.pbtns svg{width:13px;height:13px;stroke:#777;margin:-1px}
.secs{padding-top:8px}
.secs li{height:30px;display:flex;align-items:center;padding:0 23px 0 14px}
.secs li::before{content:"";border:4px solid transparent;border-left:5px solid #222b3c;border-right:0;margin-right:10px}
.secs li::after{content:"";border:3px solid transparent;border-top:4px solid #6d7a96;border-bottom:0;margin-left:auto}
.secs .bold{font-weight:700}
.secs .open{color:#417ff9}
.secs .open::before{border:0;border-left:7px solid transparent;border-bottom:7px solid #417ff9;margin-right:8px}
.secs.foot{padding:2px 0 12px}
.thumbs{flex:1;min-height:0;overflow:hidden;margin:1px 16px 0 13px;padding-top:8px;border:1px solid #f0f2f5;position:relative}
.thumbs::after{content:"";position:absolute;right:3px;top:3px;width:7px;height:101px;border-radius:4px;background:#dfe2e6}
.thumbs figure{display:flex;flex-direction:column;align-items:center;padding-right:11px}
.thumb{width:132px;height:187px;border:1px solid #d0d2d6;background:#fff}
.thumb .txt{stroke:#777;stroke-width:2;stroke-dasharray:3 1 2 1 4 1;opacity:.6}
.thumb .redtxt{stroke:#f99;stroke-width:2}
.thumb .wavy{stroke:#d22}
.thumbs figcaption{height:28px;line-height:20px}

/* rulers and document */
.vruler{width:20px;flex:none;padding:25px 1px 10px 3px;position:relative;display:flex}
.tabstop{position:absolute;left:7px;top:12px;width:6px;height:6px;border:solid #b3b9c6;border-width:0 0 2px 2px}
.vruler ol{flex:1;background:linear-gradient(#8e9cb8,#8e9cb8) right 6px/10px 1px no-repeat #e8ebf1;padding-top:17px;border-bottom:1px solid #8e9cb8;overflow:hidden;color:#4e5a72}
.vruler li{height:39px;writing-mode:vertical-rl;transform:rotate(180deg);text-align:center;line-height:14px;font-size:11px;background:linear-gradient(#8e9cb8,#8e9cb8) left 10px/10px 1px no-repeat,linear-gradient(#8e9cb8,#8e9cb8) left 30px/10px 1px no-repeat;background-position:0 10px,0 30px}
.docarea{flex:1;min-width:0;display:flex;flex-direction:column}
.hruler{height:25px;flex:none;display:flex;justify-content:center;padding-left:8px}
.hscale{width:715px;position:relative}
.extent{position:absolute;left:107px;width:499px;height:17px;background:#e6e9f1;top:0}
.hscale ol{display:grid;grid-template-columns:repeat(24,1fr);width:690px;margin-left:6px;position:relative;text-align:center;font-size:11px;line-height:15px;color:#4e5a72}
.marks{position:absolute;left:100px;top:0;stroke:#5a6780;fill:#fff;z-index:2}
.canvas{flex:1;min-height:0;overflow:hidden;display:flex;justify-content:center;padding-left:8px;position:relative}
.page{width:715px;background:#fff;box-shadow:0 0 14px #c4c7cb;padding:0 93px 0 107px;display:flex;flex-direction:column;position:relative;color:#000;font-family:"Noto Sans CJK SC","Noto Sans",sans-serif}
.body{font-size:14px;font-weight:300;flex:1}
.ln{height:28px;line-height:18px;white-space:nowrap;text-align-last:justify;padding-right:16px}
.body>.ln{padding-right:15px;position:relative;top:-3px}
.ind{margin-left:29px}
.body>.ind{margin-left:26px;padding-right:19px}
.ln.end{text-align-last:left;width:max-content;padding-right:14px}
.ln sup{font-size:8px;line-height:8px;color:#555}
.ln em{color:#f00;font-style:normal}
.ln small{font:11px "Liberation Mono",monospace;color:#c44}
.chart{width:447px;height:223px;border:1px solid #d9d9d9;margin:11px 0 0 26px;color:#666;font-size:11px;font-weight:400;padding:5px 13px 0 0}
.chart h3{font-size:16px;line-height:24px;text-align:center;padding-left:13px;font-weight:300}
.plotrow{display:flex;margin-top:16px;height:121px}
.yaxis{width:41px;text-align:right;padding-right:7px;margin-top:-9px;font-weight:300}
.yaxis li{height:30px;line-height:16px}
.plot{flex:1;height:121px;display:flex;border-bottom:1px solid #d9d9d9;background:repeating-linear-gradient(#d9d9d9 0 1px,transparent 1px 30px)}
.cat{flex:1;display:flex;align-items:flex-end;justify-content:center;gap:6px}
.cat i,.cat b{width:22px}
.legend i,.legend b{width:7px;height:7px}
.cat i,.legend i{background:#ffc000}
.cat b,.legend b{background:#5b9bd5}
.xaxis{display:flex;margin-left:41px;padding-top:4px;color:#888}
.xaxis li{flex:1;text-align:center}
.legend{display:flex;align-items:center;justify-content:center;gap:4px;padding:10px 0 0 13px;color:#777}
.caption{font-size:12px;text-align:center;margin:25px 0 9px;font-weight:400;padding-right:16px;line-height:16px}
.picked{width:514px}
.picked .ln{background:#c7c7c7}
.red{color:#d00000}
.red span{color:#000}
.blue{color:#2f5597}
.notes{font:10px/14px "Liberation Serif","Noto Sans CJK SC",serif;padding:7px 0 7px;margin-bottom:-7px;margin-left:1px;position:relative}
.notes::before{content:"";position:absolute;top:-1px;left:0;width:173px;height:1px;background:#000}
.notes sup{font-size:6px;line-height:6px;margin-right:4px;color:#666}
.crops{display:flex;justify-content:space-between;height:10px;margin:0 -7px 0 -21px;flex:none}
.crops i{width:22px;border:solid #bbb;border-width:1px 1px 0 0}
.crops i + i{border-width:1px 0 0 1px}
.float{position:absolute;left:calc(50% + 380px);top:20px;display:flex;flex-direction:column;gap:9px;align-items:flex-start}
.eject{width:24px;height:24px;justify-content:center;background:#f7f8f9;box-shadow:0 0 4px #ccd0d6;border-radius:3px;color:#555}
.check{width:100px;height:32px;background:#fff;border-radius:3px;box-shadow:0 1px 5px #c6cad1;color:#000;gap:6px;overflow:hidden}
.check span{width:31px;height:32px;background:#8b87fc;display:flex;align-items:center;justify-content:center;stroke:#fff}
.vscroll{width:15px;flex:none;display:flex;flex-direction:column;background:linear-gradient(#f5f7fa 18px,#e6e8ef 18px);position:relative}
.view{width:10px;height:11px;margin:4px 2px 4px;border:2px solid #b4bdd3;background:#fff;border-radius:2px}
.vscroll svg{fill:#8996b5}
.vscroll .o{fill:#fff;stroke:#8996b5}
.down{margin-top:auto;margin-bottom:4px}
.rrail{width:39px;flex:none;border-left:2px solid #e1e4ea;display:flex;flex-direction:column;align-items:center;gap:20px;padding-top:11px;color:#424e69}
.grip{width:20px;height:4px;border:solid #c9cdd4;border-width:1px 0;margin-bottom:1px}
.more{margin-top:auto;align-self:stretch;height:43px;border-top:1px solid #dfe3ea;display:flex;gap:2px;justify-content:center;align-items:center;padding-top:7px}
.more i{width:4px;height:4px;border:1px solid;border-radius:50%}

/* status bar */
.status{height:23px;flex:none;border-top:1px solid #dfe3ea;display:flex;align-items:center;padding:0 10px 0 7px;background:#f5f7fa;line-height:28px;overflow:hidden;gap:7px}
.status>*,.sright>*{height:30px;display:flex;align-items:center;margin-top:7px}
.status .sep{height:14px}
.status button{gap:3px}
.status .spell{background:#eaf1fc;padding:0 3px;margin-left:2px}
.status .spell + .car,.status .cont + .car{margin-left:-5px}
.status .cont{margin-left:-3px}
.car{width:6px;display:flex}
.status .miss{margin-left:12px}
.tq{font:17px/20px "Liberation Serif",serif;display:flex;align-items:baseline}
.tq sub{font-size:12px;line-height:12px}
.sright{margin-left:auto;display:flex;gap:11px}
.sright>*{margin-top:0}
.views{gap:1px;margin-right:2px}
.views button{width:25px;height:24px;justify-content:center}
.views .on{background:#d9dfe6}
.zoomv{margin:0 -5px 0 3px}
.sright .minus{margin:0 -5px 0 0}
.sright input{appearance:none;width:138px;margin:0;background:linear-gradient(90deg,#4e596e 44%,#d3d6db 44%) center/100% 1px no-repeat}
.sright input::-webkit-slider-thumb{appearance:none;width:12px;height:12px;border:1px solid #444;border-radius:50%;background:#eceae6}
.sright .full{margin-left:-3px}

/* paragraph dialog */
.dialog{position:absolute;right:8px;top:295px;width:442px;border:1px solid #666;background:#f0f0f0;color:#000;box-shadow:0 3px 14px rgba(0,0,0,.45);z-index:3}
.dtitle{display:flex;align-items:center;gap:5px;height:25px;background:#fff;padding:0 7px 0 3px}
.dtitle button{margin-left:auto}
.dtabs{display:flex;align-items:flex-end;padding:6px 7px 0;position:relative;height:31px}
.dtabs button{height:24px;width:97px;justify-content:center;border:1px solid #dcdcdc;border-bottom:0}
.dtabs .on{background:#fff;height:26px;margin-bottom:-1px;z-index:1}
.dpanel{margin:0 8px 0 7px;height:430px;border:1px solid #dcdcdc;background:#fff;padding:7px 8px 0 7px}
.dpanel h4{display:flex;align-items:center;gap:2px;height:16px}
.dpanel h4::after{content:"";flex:1;height:1px;background:#999}
.r2{display:flex;align-items:center;height:23px;margin:7px 0 0 8px}
.r2>:first-child{width:74px;flex:none}
.dialog select{appearance:none;border:1px solid #adadad;background:url("data:image/svg+xml,%3Csvg xmlns='http://www.w3.org/2000/svg' width='8' height='4'%3E%3Cpath d='M0 0h8L4 4z'/%3E%3C/svg%3E") right 5px center no-repeat #e1e1e1;height:23px;padding:0 3px;border-radius:0;width:84px}
.dialog .w115{width:115px}
.dialog .grow{flex:1;width:auto}
.lg{width:69px;margin-left:6px;white-space:nowrap}
.dir{margin-top:5px;margin-bottom:10px}
.dir label{width:121px;display:flex;align-items:center;gap:6px}
.dialog input[type=radio],.dialog input[type=checkbox]{appearance:none;width:13px;height:13px;border:1px solid #333;background:#fff;display:inline-grid;place-items:center}
.dialog input[type=radio]{border-radius:50%}
.dialog input[type=radio]:checked::after{content:"";width:7px;height:7px;border-radius:50%;background:#333}
.grid{display:grid;grid-template-columns:74px 78px 43px 90px 78px 1fr;row-gap:3px;align-items:center;margin:6px 0 0 8px;grid-auto-rows:23px;white-space:nowrap}
.spin{display:flex;align-items:center;border:1px solid #7a7a7a;background:#fff;height:23px;width:78px;padding-right:1px}
.spin input{border:0;outline:0;min-width:0;flex:1;padding:0 3px;background:none;height:20px}
.spin i{width:14px;height:19px;border:1px solid #bbb;background:linear-gradient(#bbb,#bbb) 0 8px/100% 1px no-repeat #f0f0f0;display:flex;flex-direction:column;align-items:center;justify-content:space-between;padding:2px 0}
.spin i::before,.spin i::after{content:"";border:3px solid transparent;border-bottom:3px solid #000;border-top:0}
.spin i::after{border:3px solid transparent;border-top:3px solid #000;border-bottom:0}
.unit{padding-left:3px;display:flex;align-items:center}
.dd3::after{content:"";border:3px solid transparent;border-top:3px solid #000;border-bottom:0;margin-left:2px}
.ck{display:flex;align-items:center;gap:5px;margin:8px 0 0 8px;height:16px;white-space:nowrap}
.ck + h4{margin-top:14px}
.ck input:checked::after{content:"";width:4px;height:8px;border:solid #333;border-width:0 1px 1px 0;transform:rotate(40deg)}
.ck.mixed input::after{content:"";width:7px;height:7px;background:#333}
.ck + .pv{margin-top:20px}
.combo{position:relative;display:block}
.dialog .hot{background-color:#cce4f7;border-color:#0b5a9c}
.drop{position:absolute;left:0;top:22px;width:84px;background:#fff;border:1px solid #dcdcdc;z-index:2}
.drop li{height:21px;line-height:21px;padding-left:3px}
.drop .on{background:#dadee5}
.mouse{position:absolute;left:73px;top:17px;fill:#fff;stroke:#223;z-index:3}
.preview{margin:6px 27px 0 34px;height:78px;border:1px solid #000;padding:3px 29px 0 34px;font-size:7px;line-height:9px;color:#aaa;overflow:hidden}
.preview p{height:9px;white-space:nowrap}
.preview .dk{color:#555;text-indent:14px;line-height:13px;height:33px;margin-top:-2px;white-space:normal;word-break:break-all;overflow:hidden}
.dfoot{display:flex;align-items:center;padding:6px 8px 8px;height:46px;gap:8px}
.dfoot button{width:77px;height:30px;justify-content:center;border:1px solid #adadad;background:#e1e1e1}
.dfoot a{display:flex;align-items:center;gap:5px;color:#4a90f2;stroke:#4a90f2;text-decoration:none;margin:0 auto 0 2px}
.dfoot .ok{border:2px solid #0078d7}

/* annotations */
.arrows{position:absolute;right:31px;top:330px;z-index:4;pointer-events:none;stroke:#f00;stroke-width:3;filter:drop-shadow(2px 2px 1px rgba(0,0,0,.5))}
.arrows .hd{fill:#f00;stroke-width:1}
.wm{position:absolute;right:8px;bottom:11px;display:flex;z-index:5;opacity:.85;width:152px;pointer-events:none}
.wm div{display:flex;flex-direction:column;margin-left:-1px}
.wm strong{font-size:21px;line-height:24px;color:#4a90d9;white-space:nowrap}
.wm span{font:700 16px/20px "Liberation Sans",sans-serif;color:#5fc08a}
```
